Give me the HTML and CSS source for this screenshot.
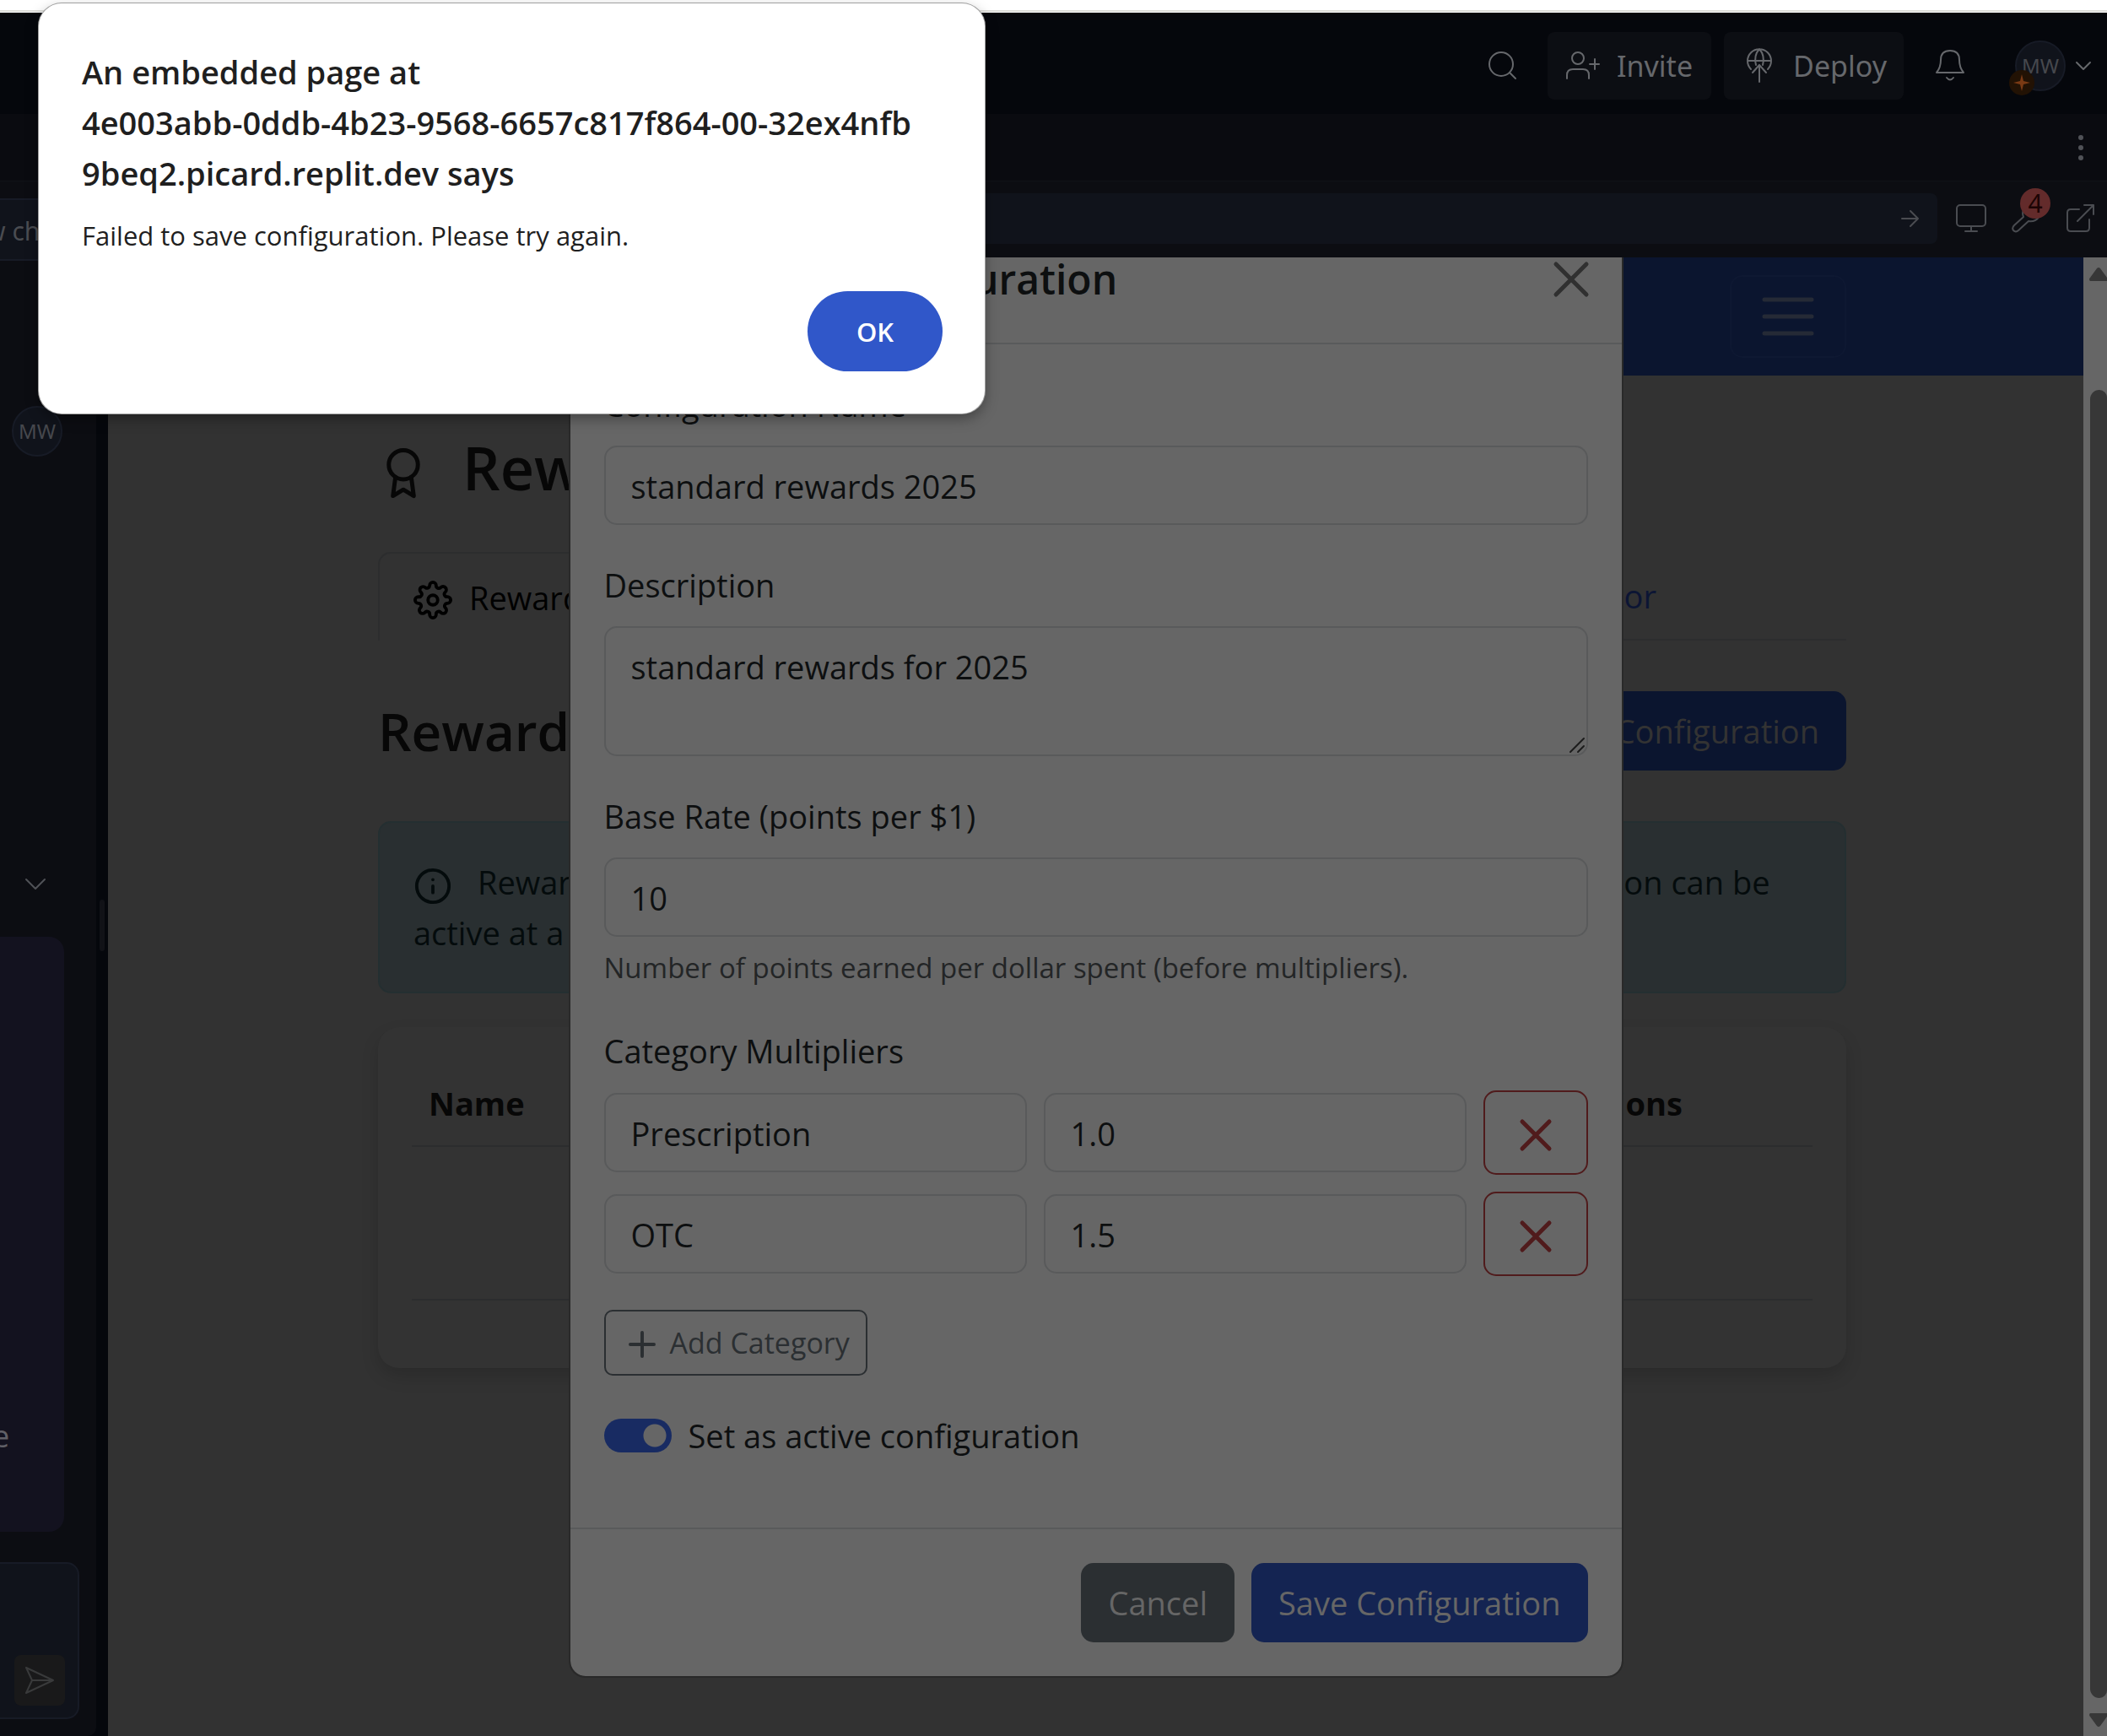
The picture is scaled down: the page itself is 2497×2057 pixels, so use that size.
FILE: index.html
```
<!DOCTYPE html>
<html lang="en">
<head>
<meta charset="utf-8">
<title>Rewards Management</title>
<link rel="stylesheet" href="styles.css">
</head>
<body>
<div class="browser-edge"></div>
<header class="topbar">
  <button class="icon-btn" aria-label="Search"><svg width="34" height="34" viewBox="0 0 34 34"><circle cx="16" cy="15" r="14"/><path d="M26 25l7 7"/></svg></button>
  <button class="bar-btn"><svg width="40" height="34" viewBox="0 0 40 34"><circle cx="14" cy="8" r="7"/><path d="M1 32v-4q0-7 7-7h12q7 0 7 7v4M34 9v12M28 15h11"/></svg>Invite</button>
  <button class="bar-btn deploy"><svg width="32" height="42" viewBox="0 0 32 42"><path d="M6 25A14 14 0 1 1 26 25M2 15h28M12 20Q9 9 16 1Q23 9 20 20M16 40V20M8 29l8-9 8 9"/></svg>Deploy</button>
  <button class="icon-btn" aria-label="Notifications"><svg width="34" height="38" viewBox="0 0 34 38"><path d="M1 27h32Q28 21 28 12Q28 1 17 1T6 12Q6 21 1 27zM13 33q4 5 8 0"/></svg></button>
  <button class="account" aria-label="Account"><span class="avatar">MW<span class="spark"><svg width="20" height="20" viewBox="0 0 20 20"><path d="M10 0l2 8 8 2-8 2-2 8-2-8-8-2 8-2z"/></svg></span></span><svg width="18" height="10" viewBox="0 0 18 10"><path d="M1 1l8 8 8-8"/></svg></button>
</header>
<div class="tabbar"><button class="icon-btn" aria-label="More"><svg class="dots" width="8" height="32" viewBox="0 0 8 32"><circle cx="4" cy="4" r="3"/><circle cx="4" cy="16" r="3"/><circle cx="4" cy="28" r="3"/></svg></button></div>
<div class="urlbar">
  <div class="address"><svg width="20" height="20" viewBox="0 0 20 20"><path d="M0 10h19M10 1l9 9-9 9"/></svg></div>
  <button class="icon-btn" aria-label="Screen size"><svg width="36" height="34" viewBox="0 0 36 34"><rect x="1" y="1" width="34" height="25" rx="4"/><path d="M18 26v6M11 32h14"/></svg></button>
  <button class="icon-btn tools" aria-label="Developer tools"><svg width="34" height="34" viewBox="0 0 34 34"><path d="M14 15q-3-8 4-12q4-2 8-1l-5 6 1 4 5 1 5-5q2 8-4 11q-4 2-8 1L8 31q-3 3-6 0q-2-3 1-6z"/></svg><span class="count">4</span></button>
  <button class="icon-btn" aria-label="Open in new tab"><svg width="34" height="34" viewBox="0 0 34 34"><path d="M16 6H6q-4 0-4 4v18q0 4 4 4h18q4 0 4-4V18M22 1h11v11M33 1L14 20"/></svg></button>
</div>
<main class="workspace">
  <aside class="chat">
    <span class="avatar">MW</span>
    <button class="icon-btn collapse" aria-label="Collapse"><svg width="24" height="14" viewBox="0 0 24 14"><path d="M1 1l11 11 11-11"/></svg></button>
    <div class="bubble">e</div>
    <div class="composer"><button class="send" aria-label="Send"><svg width="36" height="34" viewBox="0 0 36 34"><path d="M2 2l32 15L2 32l7-15zM9 17h25"/></svg></button></div>
  </aside>
  <div class="divider"><span></span></div>
  <section class="preview">
    <div class="page">
      <nav class="navbar"><button class="menu" aria-label="Menu"><svg width="62" height="46" viewBox="0 0 62 46"><path d="M3 3h56M3 23h56M3 43h56"/></svg></button></nav>
      <div class="container">
        <h1><svg width="60" height="64" viewBox="0 0 24 26"><circle cx="12" cy="8" r="7"/><path d="M8.2 13.9L7 23l5-3 5 3-1.200-9.100"/></svg>Rewards Management</h1>
        <div class="tabs">
          <a class="active" href="#configs"><svg width="46" height="46" viewBox="0 0 24 24"><circle cx="12" cy="12" r="3"/><path d="M19.400 15a1.650 1.650 0 0 0 .33 1.820l.06.06a2 2 0 0 1-2.830 2.830l-.06-.06a1.650 1.650 0 0 0-2.900 1.170V21a2 2 0 0 1-4 0v-.09a1.650 1.650 0 0 0-2.900-1.260l-.06.06a2 2 0 0 1-2.830-2.830l.06-.06A1.650 1.650 0 0 0 3.090 14H3a2 2 0 0 1 0-4h.09A1.650 1.650 0 0 0 4.600 7.180l-.06-.06a2 2 0 0 1 2.830-2.830l.06.06A1.650 1.650 0 0 0 10 3.090V3a2 2 0 0 1 4 0v.09a1.650 1.650 0 0 0 2.820 1.180l.06-.06a2 2 0 0 1 2.830 2.830l-.06.06A1.650 1.650 0 0 0 20.910 10H21a2 2 0 0 1 0 4h-.09a1.650 1.650 0 0 0-1.510 1z"/></svg>Reward Configurations</a>
          <a href="#history">Points History</a>
          <a href="#calc">Points Calculator</a>
        </div>
        <div class="title-row"><h2>Reward Configurations</h2><button class="btn primary-dim">Create New Configuration</button></div>
        <div class="alert"><svg width="46" height="46" viewBox="0 0 24 24"><circle cx="12" cy="12" r="10"/><path d="M12 16v-4M12 8h.01"/></svg>Reward configurations show how members earn points. Only one configuration can be active at a time.</div>
        <div class="card">
          <table>
            <thead><tr><th>Name</th><th>Description</th><th>Base Rate</th><th>Status</th><th class="actions">Actions</th></tr></thead>
            <tbody><tr><td colspan="5"></td></tr></tbody>
          </table>
        </div>
      </div>
    </div>
    <div class="scrollbar"><svg width="28" height="18" viewBox="0 0 28 18"><path d="M8 17q-2-2 0-4l8-11q2-2 4 0l8 11v4z"/></svg><span class="thumb"></span><svg width="28" height="18" viewBox="0 0 28 18"><path d="M8 1q-2 2 0 4l8 11q2 2 4 0l8-11V1z"/></svg></div>
    <form class="modal" onsubmit="return false">
      <div class="modal-head"><h3>Edit Reward Configuration</h3><button type="button" class="close" aria-label="Close"><svg width="40" height="40" viewBox="0 0 40 40"><path d="M2 2l36 36M38 2L2 38"/></svg></button></div>
      <div class="modal-body">
        <div class="field"><label for="cname">Configuration Name</label><input id="cname" type="text" value="standard rewards 2025"></div>
        <div class="field"><label for="cdesc">Description</label><div class="area"><textarea id="cdesc">standard rewards for 2025</textarea><svg class="grip" width="18" height="18" viewBox="0 0 18 18"><path d="M1 17L17 1M10 17l7-7"/></svg></div></div>
        <div class="field"><label for="crate">Base Rate (points per $1)</label><input id="crate" type="text" value="10"><p class="help">Number of points earned per dollar spent (before multipliers).</p></div>
        <fieldset class="field">
          <legend>Category Multipliers</legend>
          <div class="rows">
            <div class="row"><input type="text" aria-label="Category" value="Prescription"><input type="text" aria-label="Multiplier" value="1.0"><button type="button" class="remove" aria-label="Remove"><svg width="36" height="36" viewBox="0 0 36 36"><path d="M2 2l32 32M34 2L2 34"/></svg></button></div>
            <div class="row"><input type="text" aria-label="Category" value="OTC"><input type="text" aria-label="Multiplier" value="1.5"><button type="button" class="remove" aria-label="Remove"><svg width="36" height="36" viewBox="0 0 36 36"><path d="M2 2l32 32M34 2L2 34"/></svg></button></div>
          </div>
          <button type="button" class="add"><svg width="30" height="30" viewBox="0 0 30 30"><path d="M15 1v28M1 15h28"/></svg>Add Category</button>
        </fieldset>
        <div class="field switch"><input id="active" type="checkbox" checked><label for="active">Set as active configuration</label></div>
      </div>
      <div class="modal-foot"><button type="button" class="btn cancel">Cancel</button><button class="btn primary">Save Configuration</button></div>
    </form>
  </section>
</main>
<div class="new-chat">w chat</div>
<div class="alertbox" role="alertdialog" aria-labelledby="at">
  <h4 id="at">An embedded page at<br>4e003abb-0ddb-4b23-9568-6657c817f864-00-32ex4nfb<br>9beq2.picard.replit.dev says</h4>
  <p>Failed to save configuration. Please try again.</p>
  <button>OK</button>
</div>
</body>
</html>
```
FILE: styles.css
```
* { box-sizing: border-box; }
body {
  margin: 0;
  height: 100vh;
  display: flex;
  flex-direction: column;
  position: relative;
  overflow: hidden;
  background: #05070c;
  font: 38px/60px "Open Sans", "Noto Sans", sans-serif;
  color: #0d0f10;
}
button, input, textarea { font: inherit; color: inherit; margin: 0; }
button { border: 0; background: none; padding: 0; white-space: nowrap; }
h1, h2, h3, h4, p { margin: 0; font-weight: 600; }
svg { display: block; flex: none; fill: none; stroke: currentColor; stroke-width: 2; stroke-linecap: round; stroke-linejoin: round; overflow: visible; }

.browser-edge { flex: none; height: 15px; background: #fff; border-bottom: 1px solid #fff; box-shadow: inset 0 -2px #dcdcd8; }
.topbar { flex: none; height: 120px; display: flex; align-items: center; justify-content: flex-end; padding: 6px 19px 0 0; color: #66686c; font: 34px/40px "Noto Sans", sans-serif; }
.bar-btn { height: 80px; display: flex; align-items: center; gap: 20px; padding: 0 22px; margin-left: 15px; border-radius: 8px; background: #0c0e13; }
.topbar > .icon-btn:first-child { margin-right: 22px; }
.bar-btn.deploy { padding: 0 20px 0 26px; gap: 24px; }
.bar-btn + .icon-btn { margin: 0 60px 0 38px; }
.account { display: flex; align-items: center; gap: 12px; }
.avatar { position: relative; width: 60px; height: 60px; display: flex; align-items: center; justify-content: center; border: 2px solid #171b26; border-radius: 50%; background: #10131b; color: #46484d; font: 24px/30px "Noto Sans", sans-serif; }
.spark { position: absolute; left: -9px; bottom: -7px; width: 30px; height: 30px; display: grid; place-items: center; border-radius: 50%; background: #221204; }
.spark svg { fill: #7a3a14; stroke: none; }
.tabbar { flex: none; height: 80px; display: flex; align-items: center; justify-content: flex-end; padding-right: 27px; background: #0a0b10; border-bottom: 1px solid #101218; color: #505257; }
.dots { fill: currentColor; stroke: none; }
.urlbar { flex: none; height: 90px; display: flex; align-items: center; gap: 22px; padding: 0 15px 2px 136px; background: #0c0d12; color: #4a4c51; }
.address { flex: 1; height: 60px; display: flex; align-items: center; justify-content: flex-end; padding-right: 22px; border-radius: 8px; background: #10131b; }
.tools { position: relative; margin: 0 8px; }
.count { position: absolute; left: 10px; top: -19px; width: 36px; height: 36px; border-radius: 50%; background: #632b2b; color: #1c0404; font: 30px/36px "Noto Sans", sans-serif; }

.workspace { flex: 1; min-height: 0; display: flex; }
.chat { flex: none; width: 114px; display: flex; flex-direction: column; padding: 176px 20px 20px 0; background: #0c0d12; color: #505257; border-bottom-right-radius: 10px; }
.chat .avatar { margin-left: 14px; }
.collapse { margin: 500px 0 55px 30px; align-self: flex-start; }
.bubble { flex: none; width: 76px; height: 705px; padding-top: 562px; overflow: hidden; border-radius: 0 18px 18px 0; background: #13121f; color: #606067; text-indent: -9px; font-size: 36px; }
.composer { flex: 1; margin-top: 36px; display: flex; align-items: flex-end; padding: 0 15px 14px 17px; border: 2px solid #171b26; border-left: 0; border-radius: 0 15px 15px 0; background: #10131b; }
.send { width: 60px; height: 60px; display: grid; place-items: center; border-radius: 8px; background: #19191a; color: #393a3b; }
.divider { flex: none; width: 14px; padding: 761px 4px 0; }
.divider span { display: block; height: 61px; border-radius: 3px; background: #111217; }

.preview { flex: 1; min-width: 0; position: relative; display: flex; overflow: hidden; background: #323232; }
.page { flex: 1; min-width: 0; }
.navbar { height: 140px; display: flex; align-items: center; justify-content: flex-end; padding-right: 281px; background: #0b152f; color: #252a36; }
.menu { width: 138px; height: 98px; display: grid; place-items: center; border: 2px solid #0e1832; border-radius: 15px; }
.menu svg { stroke-width: 5; }
.container { padding: 60px 281px 0 320px; }
h1 { display: flex; align-items: center; gap: 40px; font-size: 70px; line-height: 98px; color: #070707; }
h1 svg { padding-top: 18px; height: 82px; }
.tabs { display: flex; height: 105px; margin: 51px 0 60px; border-bottom: 2px solid #2c2d2e; }
.tabs a { display: flex; align-items: center; gap: 20px; padding: 0 40px; color: #0c1534; text-decoration: none; white-space: nowrap; }
.tabs a svg { height: 52px; padding-top: 6px; }
.tabs .active { height: 105px; border: 2px solid #2c2d2e; border-bottom: 0; border-radius: 15px 15px 0 0; background: #323232; color: #000; }
.tabs a:last-child { margin: 0 185px 0 auto; }
.title-row { display: flex; align-items: center; justify-content: space-between; }
h2 { font-size: 62px; line-height: 94px; color: #070707; }
.btn { height: 94px; padding: 0 32px; border-radius: 15px; }
.primary-dim { background: #0b152f; color: #333; }
.alert { margin: 60px 0 40px; padding: 40px; border: 2px solid #242f31; border-radius: 15px; background: #292f31; color: #040b0c; }
.alert svg { display: inline-block; vertical-align: middle; margin-right: 30px; }
.card { padding: 60px 40px 80px; border-radius: 25px; background: #333; box-shadow: 0 10px 20px rgba(0, 0, 0, .15); }
table { width: 100%; border-collapse: collapse; table-layout: fixed; }
th { padding: 0 20px 20px; text-align: left; font-weight: 700; color: #070707; border-bottom: 2px solid #2c2d2e; }
.actions { width: 19%; }
td { height: 182px; border-bottom: 2px solid #2c2d2e; }
.scrollbar { flex: none; width: 28px; display: flex; flex-direction: column; align-items: center; padding: 11px 0 10px; background: #666; color: #373737; }
.scrollbar svg { fill: currentColor; stroke: none; }
.thumb { flex: 1; align-self: stretch; margin: 128px 0 17px 8px; border-radius: 12px 10px 10px 12px; background: #373737; }

.modal { position: absolute; top: -56px; left: 0; right: 28px; width: 1250px; margin: 0 auto; border: 2px solid #292929; border-radius: 20px; background: #666; background-clip: padding-box; }
.modal-head { display: flex; align-items: center; justify-content: space-between; padding: 42px 40px 38px; border-bottom: 2px solid #595a5b; }
h3 { font-size: 48px; line-height: 75px; }
.close { color: #303030; }
.close svg { stroke-width: 5; }
.modal-body { padding: 40px; display: flex; flex-direction: column; gap: 40px; }
.field { display: flex; flex-direction: column; gap: 18px; border: 0; margin: 0; padding: 0; min-width: 0; }
label, legend { line-height: 62px; }
legend { padding: 0; margin-bottom: 16px; }
fieldset.field { display: block; }
input[type=text], textarea { display: block; width: 100%; min-width: 0; height: 94px; padding: 16px 30px 14px; border: 2px solid #595a5b; border-radius: 15px; background: #666; outline: 0; }
textarea { height: 154px; resize: none; }
.area { position: relative; }
.grip { position: absolute; right: 4px; bottom: 4px; color: #1c1c1c; }
.help { margin-top: -8px; font-weight: 400; font-size: 33px; line-height: 54px; color: #232526; }
.rows { display: flex; flex-direction: column; gap: 20px; margin-bottom: 40px; }
.row { display: flex; align-items: center; gap: 20px; }
.remove { flex: none; width: 124px; height: 100px; padding-top: 6px; display: grid; place-items: center; border: 2px solid #501b1c; border-radius: 15px; color: #501b1c; }
.remove svg { stroke-width: 5; }
.add { height: 78px; display: flex; align-items: center; gap: 18px; padding: 0 19px 0 28px; border: 2px solid #2b2f32; border-radius: 10px; color: #2b2f32; font-size: 34px; }
.add svg { stroke-width: 4; padding-top: 4px; height: 34px; }
.switch { flex-direction: row; align-items: center; gap: 20px; margin-bottom: 38px; }
.switch input { appearance: none; width: 80px; height: 40px; margin: 0; border-radius: 20px; background: radial-gradient(circle at 60px 20px, #666 13px, #182b62 14px); }
.modal-foot { display: flex; justify-content: flex-end; gap: 20px; padding: 40px; border-top: 2px solid #595a5b; }
.cancel { background: #2b2f32; color: #666; }
.primary { background: #142452; color: #666; }

.new-chat { position: absolute; left: 0; top: 235px; width: 120px; height: 74px; border: 2px solid #171b26; border-left: 0; background: #10131b; color: #4a4c51; font: 30px/73px "Noto Sans", sans-serif; text-indent: -17px; overflow: hidden; }
.alertbox { position: absolute; left: 46px; top: 4px; width: 1121px; height: 486px; display: flex; flex-direction: column; padding: 51px 50px 50px 51px; border-radius: 27px; background: #fff; box-shadow: 0 0 0 1px #a0a0a0, 0 6px 16px rgba(0, 0, 0, .35); color: #1f1f1f; }
.alertbox h4 { font-size: 38px; line-height: 60px; white-space: nowrap; }
.alertbox p { margin-top: 19px; font-weight: 400; font-size: 31px; line-height: 50px; }
.alertbox button { align-self: flex-end; margin-top: auto; width: 160px; height: 95px; border-radius: 48px; background: #3057c9; color: #fff; font-weight: 600; font-size: 31px; }
```
